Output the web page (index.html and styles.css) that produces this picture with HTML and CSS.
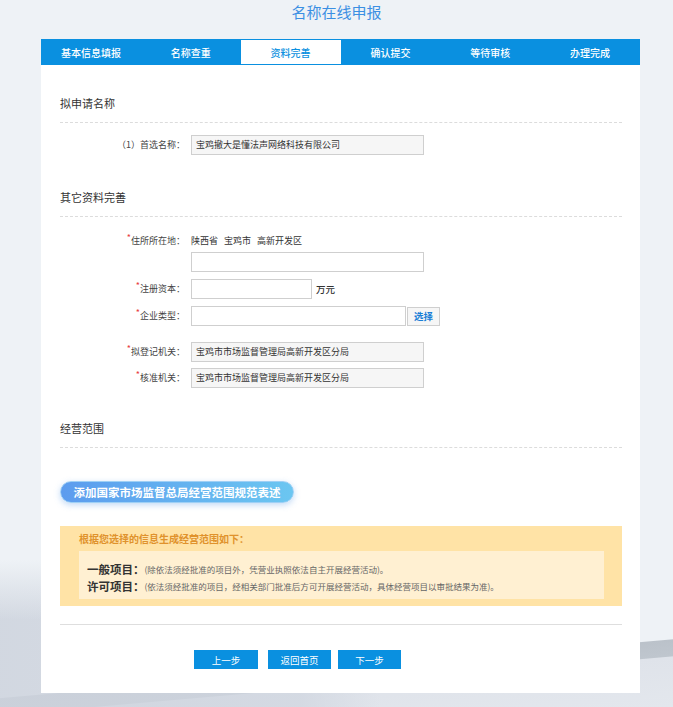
FILE: index.html
```html
<!DOCTYPE html>
<html lang="zh-CN">
<head>
<meta charset="utf-8">
<title>名称在线申报</title>
<link rel="stylesheet" href="styles.css">
</head>
<body>
<div class="page">
  <h1 class="title">名称在线申报</h1>
  <nav class="steps">
    <span class="step">基本信息填报</span>
    <span class="step">名称查重</span>
    <span class="step active">资料完善</span>
    <span class="step">确认提交</span>
    <span class="step">等待审核</span>
    <span class="step">办理完成</span>
  </nav>
  <main class="panel">
    <h2 class="sec-title first">拟申请名称</h2>
    <div class="row r-name">
      <label class="lbl">（1）首选名称：</label>
      <div class="field readonly w233">宝鸡撤大是懂法声网络科技有限公司</div>
    </div>

    <h2 class="sec-title second">其它资料完善</h2>
    <div class="row r-addr">
      <label class="lbl"><i class="req">*</i>住所所在地：</label>
      <div class="addr-text">陕西省&nbsp;&nbsp;&nbsp;宝鸡市&nbsp;&nbsp;&nbsp;高新开发区</div>
    </div>
    <div class="row r-addr2">
      <span class="lbl"></span>
      <div class="field w233"></div>
    </div>
    <div class="row r-cap">
      <label class="lbl"><i class="req">*</i>注册资本：</label>
      <div class="field w121"></div>
      <span class="unit">万元</span>
    </div>
    <div class="row r-type">
      <label class="lbl"><i class="req">*</i>企业类型：</label>
      <div class="field w215"></div>
      <span class="pick">选择</span>
    </div>
    <div class="row r-reg">
      <label class="lbl"><i class="req">*</i>拟登记机关：</label>
      <div class="field readonly w233">宝鸡市市场监督管理局高新开发区分局</div>
    </div>
    <div class="row r-app">
      <label class="lbl"><i class="req">*</i>核准机关：</label>
      <div class="field readonly w233">宝鸡市市场监督管理局高新开发区分局</div>
    </div>

    <h2 class="sec-title third">经营范围</h2>
    <div class="add-wrap"><span class="add-btn">添加国家市场监督总局经营范围规范表述</span></div>

    <section class="scope">
      <div class="scope-title">根据您选择的信息生成经营范围如下：</div>
      <div class="scope-body">
        <p class="scope-line"><b>一般项目：</b><span>(除依法须经批准的项目外，凭营业执照依法自主开展经营活动)。</span></p>
        <p class="scope-line"><b>许可项目：</b><span>(依法须经批准的项目，经相关部门批准后方可开展经营活动，具体经营项目以审批结果为准)。</span></p>
      </div>
    </section>

    <hr class="sep">
    <div class="actions">
      <span class="btn">上一步</span>
      <span class="btn b2">返回首页</span>
      <span class="btn b3">下一步</span>
    </div>
  </main>
</div>
</body>
</html>
```
FILE: styles.css
```css
* { box-sizing: border-box; }
html, body { margin: 0; padding: 0; }
body {
  width: 673px;
  height: 707px;
  overflow: hidden;
  font-family: "Noto Sans CJK SC", "Noto Sans", sans-serif;
  color: #333;
  background-color: #eef2f6;
  background-image:
    linear-gradient(to bottom, rgba(238,242,246,1) 0, rgba(238,242,246,0) 60px),
    linear-gradient(to right, rgba(205,211,221,0.85) 0, rgba(208,214,224,0.75) 300px, rgba(224,228,235,0) 380px),
    linear-gradient(175deg, rgba(238,242,246,0) 0, rgba(238,242,246,0) 695px, #bbc2ca 696px, #bfc6ce 712px, #dfe3ea 713px, #e3e7ed 763px);
  background-repeat: no-repeat;
  background-position: 0 560px, 0 560px, 0 0;
  background-size: 100% 60px, 100% 147px, 100% 100%;
}
.page { width: 673px; }
.title {
  margin: 0;
  height: 39px;
  padding-top: 3px;
  line-height: 18px;
  text-align: center;
  font-size: 15px;
  font-weight: normal;
  color: #3b8fe3;
}
.steps {
  margin-left: 41px;
  width: 599px;
  height: 26px;
  background: #0a90e0;
  display: grid;
  grid-template-columns: repeat(6, 1fr);
}
.step {
  display: flex;
  align-items: center;
  justify-content: center;
  color: #fff;
  font-size: 10px;
  font-weight: 500;
}
.step.active {
  background: #fff;
  color: #0a90e0;
  margin: 1px 0;
}
.panel {
  margin-left: 41px;
  width: 599px;
  height: 628px;
  background: #fff;
  padding: 0 18px 0 19px;
}
.sec-title {
  margin: 0;
  font-size: 11px;
  font-weight: normal;
  line-height: 16px;
  color: #333;
  padding-top: 30px;
  padding-bottom: 11px;
  border-bottom: 1px dashed #dcdcdc;
}
.sec-title.second { padding-top: 34px; }
.sec-title.third { padding-top: 32px; }
.row {
  display: flex;
  align-items: center;
}
.lbl {
  width: 126px;
  flex: none;
  text-align: right;
  font-size: 9px;
  color: #444;
  padding-right: 1px;
  margin-right: 5px;
  line-height: 16px;
}
.req {
  font-style: normal;
  color: #e8383d;
  font-size: 9px;
  position: relative;
  top: -3px;
}
.field {
  height: 20px;
  border: 1px solid #cfcfcf;
  background: #fff;
  font-size: 9px;
  line-height: 18px;
  padding-left: 4px;
  color: #333;
  white-space: nowrap;
}
.field.readonly { background: #f6f6f6; }
.w233 { width: 233px; }
.w121 { width: 121px; }
.w215 { width: 215px; }
.r-name { margin-top: 12px; }
.r-addr { margin-top: 16px; }
.r-addr2 { margin-top: 3px; }
.r-cap { margin-top: 7px; }
.r-type { margin-top: 7px; }
.r-reg { margin-top: 16px; }
.r-app { margin-top: 6px; }
.addr-text { font-size: 9px; line-height: 16px; color: #333; }
.unit { font-size: 9.5px; margin-left: 4px; color: #333; font-weight: 500; }
.pick {
  width: 33px;
  height: 19px;
  margin-left: 1px;
  border: 1px solid #cfcfcf;
  background: #f6f6f6;
  color: #1a7fd6;
  font-size: 9.5px;
  font-weight: bold;
  display: flex;
  align-items: center;
  justify-content: center;
}
.add-wrap { margin-top: 33px; height: 22px; }
.add-btn {
  display: inline-flex;
  align-items: center;
  justify-content: center;
  width: 234px;
  height: 22px;
  border-radius: 11px;
  background: linear-gradient(to right, #5c9cee, #6bc6f1);
  border: 1px solid #9fd0f5;
  box-shadow: 0 2px 6px rgba(80,150,230,0.35);
  color: #fff;
  font-size: 11.5px;
  font-weight: bold;
  vertical-align: top;
}
.scope {
  margin-top: 23px;
  background: #ffe3a6;
  padding: 6px 18px 7px 19px;
}
.scope-title {
  font-size: 10px;
  font-weight: bold;
  color: #e0922c;
  line-height: 14px;
  height: 14px;
}
.scope-body {
  margin-top: 5px;
  background: #fff0d2;
  padding: 10px 8px 4px;
}
.scope-line {
  margin: 0;
  height: 17px;
  line-height: 17px;
  white-space: nowrap;
  display: flex;
  align-items: center;
}
.scope-line b { font-size: 11.5px; color: #333; line-height: 17px; }
.scope-line span { font-size: 8.5px; color: #666; line-height: 17px; }
.sep {
  margin: 18px 0 0;
  border: 0;
  border-top: 1px solid #dedede;
  height: 0;
}
.actions {
  margin-top: 25px;
  padding-left: 134px;
  display: flex;
}
.btn {
  width: 64px;
  height: 19px;
  background: #0a90e0;
  color: #fff;
  font-size: 9.5px;
  display: flex;
  align-items: center;
  justify-content: center;
}
.btn.b2 { margin-left: 10px; width: 63px; }
.btn.b3 { margin-left: 7px; width: 63px; }
```
